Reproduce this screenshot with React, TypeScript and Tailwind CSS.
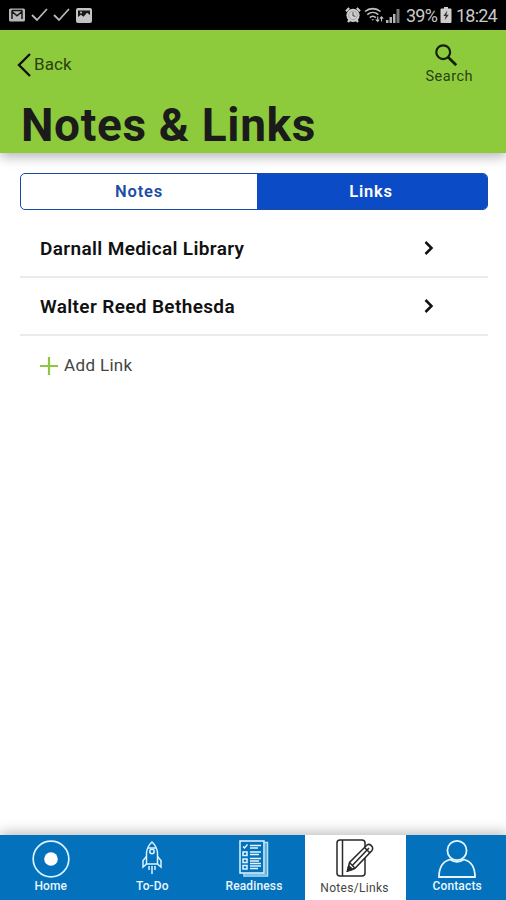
import type { ReactNode } from 'react';

const StatusBar = () => {
  return (
    <div className="flex h-[30px] shrink-0 items-center justify-between bg-black pl-[9px] pr-[9px] text-[#c9c9c9]">
      <div className="flex items-center">
        {/* Mail */}
        <svg className="h-[14px] w-4" viewBox="0 0 16 14">
          <rect width="16" height="13" y=".5" rx="1.5" fill="#b8b8b8" />
          <path d="M3 11V3.5l5 4.2 5-4.2V11M3 2.5h10" fill="none" stroke="#171717" strokeWidth="1.5" />
        </svg>
        {/* Checks */}
        <svg className="ml-[6px] h-[14px] w-[17px]" viewBox="0 0 17 14">
          <path d="M1 7l5 5L16 1" fill="none" stroke="#b8b8b8" strokeWidth="1.8" />
        </svg>
        <svg className="ml-[5px] h-[14px] w-[17px]" viewBox="0 0 17 14">
          <path d="M1 7l5 5L16 1" fill="none" stroke="#b8b8b8" strokeWidth="1.8" />
        </svg>
        {/* Picture */}
        <svg className="ml-[6px] h-[15px] w-4" viewBox="0 0 16 15">
          <rect width="16" height="15" rx="2" fill="#c4c4c4" />
          <path d="M2 9V2.5h12V7l-3-2.2-3.5 4-2.6-2z" fill="#171717" />
          <circle cx="5" cy="4.5" r="1" fill="#c4c4c4" />
        </svg>
      </div>

      <div className="flex items-center">
        {/* Alarm */}
        <svg className="h-4 w-4" viewBox="0 0 16 16">
          <circle cx="8" cy="8.3" r="6.6" fill="#cfcfcf" />
          <path d="M1 4.2L4.2 1M15 4.2L11.8 1M3 15l1.8-2.2M13 15l-1.8-2.2" stroke="#cfcfcf" strokeWidth="2.2" />
          <circle cx="8" cy="8.3" r="4.3" fill="none" stroke="#999" strokeWidth=".8" />
          <path d="M8 5.2v3.4l2.4 1" fill="none" stroke="#555" strokeWidth="1.1" />
        </svg>
        {/* Wi-Fi */}
        <svg className="ml-[3px] h-4 w-5" viewBox="0 0 20 16" fill="none" stroke="#c4c4c4" strokeWidth="1.6">
          <path d="M1 4.5C5.5.6 12 .6 16.5 4.5M3.3 7.6c3.3-2.8 7.7-2.8 11 0M5.8 10.6c1.8-1.6 4.2-1.6 6 0" />
          <path d="M7.5 12.2h2.6l-1.3 1.6z" fill="#c4c4c4" stroke="none" />
          <path d="M13.7 14.5V9.6m-1.9 2.8 1.9 2.1 1.5-1.8M17.5 10v4.5m-1.6-2.8 1.6-1.8 1.7 1.8" strokeWidth="1.1" />
        </svg>
        {/* Signal */}
        <svg className="ml-[2px] h-[15px] w-[14px]" viewBox="0 0 14 15">
          <path d="M0 12h2.5v3H0zM3.5 9H6v6H3.5zM7 6h2.5v9H7z" fill="#b4b4b4" />
          <path d="M10.5 1h3v14h-3z" fill="#777" />
        </svg>
        <span className="ml-[6px] w-[31px] whitespace-nowrap pt-[2px] text-[18px] leading-[28px] tracking-[-0.8px]">39%</span>
        {/* Battery */}
        <svg className="ml-[3px] h-4 w-3" viewBox="0 0 12 16">
          <path d="M4 0h4v1.6h2.5q1 0 1 1V15q0 1-1 1h-9q-1 0-1-1V2.6q0-1 1-1H4z" fill="#cfcfcf" />
          <path d="M7.4 3.5L3.4 9h2.3l-1 4.3 4.1-5.6H6.4z" fill="#333" />
        </svg>
        <span className="ml-[4px] w-[41px] whitespace-nowrap pt-[2px] text-[18px] leading-[28px] tracking-[-0.8px]">18:24</span>
      </div>
    </div>
  );
};

const Header = () => {
  return (
    <header className="z-10 flex h-[123px] shrink-0 flex-col bg-[#8dcb3c] shadow-[0_3px_12px_rgba(0,0,0,0.32)]">
      <div className="flex h-[67px] shrink-0 justify-between pl-[17px] pr-[33px]">
        <button className="mt-[23px] flex h-6 items-center text-[17px] text-[#2b4113]">
          <svg className="h-6 w-[14px]" viewBox="0 0 14 24">
            <path d="M13 1L2 12l11 11" fill="none" stroke="#111" strokeWidth="2.4" />
          </svg>
          <span className="ml-[3px] tracking-[0.1px]">Back</span>
        </button>
        <button className="mt-[14px] flex h-11 flex-col items-start text-[14.5px] leading-4 text-[#2b4113]">
          <svg className="ml-[10px] h-[22px] w-[22px]" viewBox="0 0 22 22" fill="none" stroke="#14200a">
            <circle cx="8.2" cy="8.2" r="6.9" strokeWidth="2.2" />
            <path d="M13.2 13.2l8 8" strokeWidth="2.7" />
          </svg>
          <span className="mt-[3px] tracking-[0.5px]">Search</span>
        </button>
      </div>
      <h1 className="shrink-0 pl-[21px] text-[46px] font-bold leading-[56px] tracking-[0.65px] text-[#1b1b1b]">Notes &amp; Links</h1>
    </header>
  );
};

const LinkRow = ({ title }: { title: string }) => {
  return (
    <li className="flex h-[58px] items-center justify-between border-b-2 border-[#ebebeb] pl-5 pr-[54px]">
      <span className="pt-[2px] text-[19px] font-semibold tracking-[0.36px] text-[#111]">{title}</span>
      <svg className="h-[14px] w-[10px]" viewBox="0 0 10 14">
        <path d="M1.5 1l6 6-6 6" fill="none" stroke="#111" strokeWidth="2.5" />
      </svg>
    </li>
  );
};

const HomeIcon = () => (
  <svg className="h-[38px] w-[38px]" viewBox="0 0 38 38">
    <circle cx="19" cy="19" r="17.8" fill="none" stroke="#d9f3ff" strokeWidth="1.7" />
    <circle cx="19" cy="19" r="6.8" fill="#fff" />
  </svg>
);

const RocketIcon = () => (
  <svg className="h-[38px] w-[38px]" viewBox="0 0 38 38" fill="none" stroke="#d9f3ff" strokeWidth="1.5">
    <path d="M13.5 24V12.5Q14.5 6 19 2q4.5 4 5.5 10.5V24zM15.5 8h7" />
    <circle cx="19" cy="11.5" r="2.2" />
    <path d="M13.5 16.5l-3.5 4V27l3.5-3M24.5 16.5l3.5 4V27l-3.5-3" />
    <path d="M16 26v4M19 26v8M22 26v4" />
  </svg>
);

const ChecklistIcon = () => (
  <svg className="h-[38px] w-[38px]" viewBox="0 0 38 38" fill="none" stroke="#e4f6ff" strokeWidth="1.5">
    <path d="M29.5 2.5h3V36H9v-2.5" stroke="#b8e2f6" />
    <path d="M31 3v31.5H9.5" stroke="#7fc0e4" />
    <rect x="5" y="1" width="24" height="32" />
    <path d="M8 6.5L9.5 8l3-3.5M8 12h4v3.5H8zM8 19h4v3.500H8zM8 25.500h4V29H8z" />
    <path d="M15 5.500h11M15 8h8M15 12h11M15 14.500h9M15 18.500h11M15 21h9M15 23.500h11M15 26h11M15 28.500h8" strokeWidth="1.3" />
  </svg>
);

const NotebookIcon = () => (
  <svg className="h-[38px] w-[38px]" viewBox="0 0 38 38" fill="none" stroke="#292929" strokeWidth="1.5">
    <rect x="1" y="1" width="28" height="36" rx="3" />
    <path d="M6.5 1v36" />
    {/* Pencil */}
    <path d="M11.5 32l2-8.5L31 6q2-1.500 4.300.6T36 11.500L19 29.300z" fill="#fff" />
    <path d="M13.500 23.500l5.500 5.800M16.300 26.400L33 9M28.500 8.500l5.500 5.500" />
    <path d="M11.500 32l1.200-5 4 3.500z" fill="#292929" />
  </svg>
);

const ContactIcon = () => (
  <svg className="h-[38px] w-[38px]" viewBox="0 0 38 38" fill="none" stroke="#e4f6ff" strokeWidth="1.8">
    <circle cx="19" cy="10.5" r="9.6" />
    <path d="M12 19.5Q1 22.5 1 37h36q0-14.5-11-17.5-7 4.5-14 0z" />
  </svg>
);

const tabs: { label: string; icon: ReactNode; active?: boolean }[] = [
  { label: 'Home', icon: <HomeIcon /> },
  { label: 'To-Do', icon: <RocketIcon /> },
  { label: 'Readiness', icon: <ChecklistIcon /> },
  { label: 'Notes/Links', icon: <NotebookIcon />, active: true },
  { label: 'Contacts', icon: <ContactIcon /> },
];

const TabBar = () => {
  return (
    <nav className="grid h-[65px] w-[508px] shrink-0 grid-cols-[repeat(5,101.6px)] shadow-[0_-3px_12px_rgba(0,0,0,0.25)]">
      {tabs.map((tab) => (
        <button
          key={tab.label}
          className={
            tab.active
              ? 'flex flex-col items-center bg-white pr-[2px] pt-[4px] text-[12px] leading-4 tracking-[0.3px] text-[#444]'
              : 'flex flex-col items-center bg-[#0371bb] pt-[5px] text-[12px] font-medium leading-4 tracking-[0.15px] text-[#e8f7ff]'
          }
        >
          {tab.icon}
          <span className={tab.active ? 'mt-[3px]' : ''}>{tab.label}</span>
        </button>
      ))}
    </nav>
  );
};

const App = () => {
  return (
    <div className="flex h-[900px] w-[506px] flex-col overflow-hidden bg-white font-[Roboto,sans-serif]">
      <StatusBar />
      <Header />

      <main className="flex-1 pl-5 pr-[18px] pt-5">
        {/* Notes / Links switch */}
        <div className="flex h-[37px] overflow-hidden rounded-[5px] border border-[#174ba5] text-[16.5px] font-semibold tracking-[0.8px]">
          <button className="w-[236px] pt-[2px] text-[#1b4da6]">Notes</button>
          <button className="flex-1 bg-[#0b4bc6] pr-[2px] pt-[2px] text-white">Links</button>
        </div>

        <ul className="mt-[10px]">
          <LinkRow title="Darnall Medical Library" />
          <LinkRow title="Walter Reed Bethesda" />
        </ul>

        <button className="mt-[18px] flex h-6 items-center pl-5 text-[17px] text-[#444]">
          <svg className="h-[18px] w-[18px]" viewBox="0 0 18 18">
            <path d="M9 0v18M0 9h18" stroke="#8bc83f" strokeWidth="2.2" />
          </svg>
          <span className="ml-[6px] tracking-[0.35px]">Add Link</span>
        </button>
      </main>

      <TabBar />
    </div>
  );
};

export default App;
